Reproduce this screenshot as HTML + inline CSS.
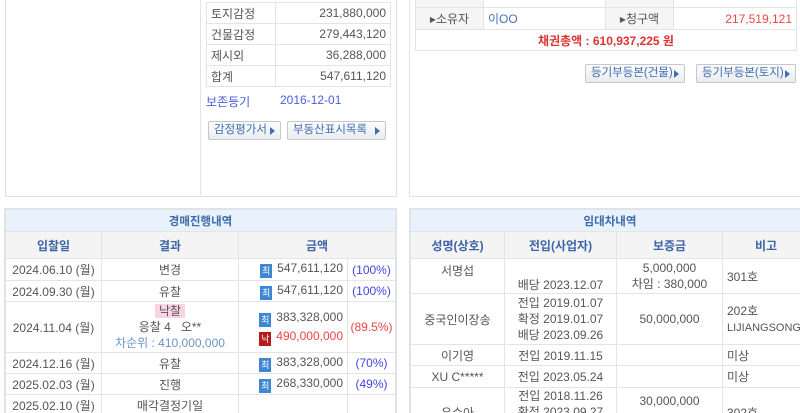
<!DOCTYPE html>
<html style="overflow:hidden;height:413px"><head><meta charset="utf-8"><style>
*{margin:0;padding:0;box-sizing:border-box}
body{width:800px;height:413px;overflow:hidden;background:#fff;font-family:"Liberation Sans","Noto Sans CJK KR",sans-serif;font-size:12px;color:#555}
#w{position:relative;width:800px;height:413px;overflow:hidden}
.abs{position:absolute}
.clip{position:absolute;overflow:hidden}
table{border-collapse:collapse;table-layout:fixed}
td,th{border:1px solid #e4e4e4;font-weight:normal;padding:0 4px;white-space:nowrap;overflow:hidden}
.btn{position:absolute;height:19px;border:1px solid #c4c8cc;border-radius:2px;background:linear-gradient(#fdfdfd,#e9ecef);color:#3d6fb0;font-size:11.5px;line-height:17px;padding-left:5px}
.btn:after{content:"";position:absolute;right:5px;top:5px;border-left:5px solid #3d6fb0;border-top:4px solid transparent;border-bottom:4px solid transparent}
.hd{background:#e9f1fc;color:#3d6aa8;text-align:center;font-weight:bold;font-size:11.5px}
.ch th{background:#f4f4f4;color:#3d64a6;font-weight:bold;font-size:12px}
.c{text-align:center}.r{text-align:right}
.ico{display:inline-block;width:12px;height:14px;background:#3f86d3;color:#fff;font-size:9px;line-height:14px;text-align:center;vertical-align:-2px;margin-right:5px}
.ico.n{background:#b51c1c}
.bl{color:#4545e0}.rd{color:#e44}
</style></head><body><div id="w">
<div class="abs" style="left:5px;top:0;width:392px;height:197px;border:1px solid #dde2ea;border-top:none"></div>
<div class="abs" style="left:200px;top:0;width:1px;height:195px;background:#e4e4e4"></div>
<table class="abs" style="left:206px;top:2px;width:185px">
<col style="width:69px"><col>
<tr style="height:21px"><td>토지감정</td><td class="r">231,880,000</td></tr>
<tr style="height:21px"><td>건물감정</td><td class="r">279,443,120</td></tr>
<tr style="height:21px"><td>제시외</td><td class="r">36,288,000</td></tr>
<tr style="height:21px"><td>합계</td><td class="r">547,611,120</td></tr>
</table>
<div class="abs" style="left:206px;top:93px;color:#4a5ee0">보존등기</div>
<div class="abs" style="left:280px;top:93px;color:#4a5ee0">2016-12-01</div>
<div class="btn" style="left:208px;top:121px;width:73px">감정평가서</div>
<div class="btn" style="left:287px;top:121px;width:99px">부동산표시목록</div>
<div class="abs" style="left:409px;top:0;width:391px;height:197px;border:1px solid #dde2ea;border-top:none;border-right:none"></div>
<div class="clip" style="left:415px;top:0;width:385px;height:60px">
<table style="position:absolute;left:0;top:-15px;width:382px">
<col style="width:68px"><col style="width:122px"><col style="width:68px"><col>
<tr style="height:22px"><td class="c" style="background:#f5f5f5"></td><td></td><td style="background:#f5f5f5"></td><td></td></tr>
<tr style="height:22px"><td class="c" style="background:#f5f5f5">▸소유자</td><td style="color:#4a6fb5">이OO</td><td class="c" style="background:#f5f5f5">▸청구액</td><td class="r rd">217,519,121</td></tr>
<tr style="height:21px"><td colspan="4" class="c" style="color:#d33;font-weight:bold">채권총액 : 610,937,225 원</td></tr>
</table></div>
<div class="btn" style="left:585px;top:64px;width:100px">등기부등본(건물)</div>
<div class="btn" style="left:696px;top:64px;width:100px">등기부등본(토지)</div>
<div class="abs" style="left:4px;top:208px;width:393px;height:205px;border:1px solid #dde2ea;border-bottom:none"></div>
<div class="clip" style="left:5px;top:209px;width:391px;height:204px">
<table style="width:391px">
<col style="width:96px"><col style="width:137px"><col style="width:109px"><col>
<tr style="height:22px"><td colspan="4" class="hd">경매진행내역</td></tr>
<tr class="ch" style="height:27px"><th>입찰일</th><th>결과</th><th colspan="2">금액</th></tr>
<tr style="height:22px"><td class="c">2024.06.10 (월)</td><td class="c">변경</td><td class="r"><span class="ico">최</span>547,611,120</td><td class="c bl" style="padding:0">(100%)</td></tr>
<tr style="height:21px"><td class="c">2024.09.30 (월)</td><td class="c">유찰</td><td class="r"><span class="ico">최</span>547,611,120</td><td class="c bl" style="padding:0">(100%)</td></tr>
<tr style="height:51px"><td class="c">2024.11.04 (월)</td><td class="c" style="line-height:16px"><span style="background:#fbd3e3;padding:0 4px">낙찰</span><br>응찰 4 &nbsp; 오**<br><span style="color:#6a95c8">차순위 : 410,000,000</span></td><td class="r" style="line-height:18px"><span class="ico">최</span>383,328,000<br><span class="ico n">낙</span><span class="rd">490,000,000</span></td><td class="c rd" style="padding:0">(89.5%)</td></tr>
<tr style="height:21px"><td class="c">2024.12.16 (월)</td><td class="c">유찰</td><td class="r"><span class="ico">최</span>383,328,000</td><td class="c bl" style="padding:0">(70%)</td></tr>
<tr style="height:21px"><td class="c">2025.02.03 (월)</td><td class="c">진행</td><td class="r"><span class="ico">최</span>268,330,000</td><td class="c bl" style="padding:0">(49%)</td></tr>
<tr style="height:22px"><td class="c">2025.02.10 (월)</td><td class="c">매각결정기일</td><td></td><td></td></tr>
</table></div>
<div class="abs" style="left:409px;top:208px;width:391px;height:205px;border:1px solid #dde2ea;border-bottom:none;border-right:none"></div>
<div class="clip" style="left:410px;top:209px;width:390px;height:204px">
<table style="width:400px">
<col style="width:94px"><col style="width:112px"><col style="width:106px"><col>
<tr style="height:22px"><td colspan="4" class="hd">임대차내역</td></tr>
<tr class="ch" style="height:27px"><th>성명(상호)</th><th>전입(사업자)</th><th>보증금</th><th>비고</th></tr>
<tr style="height:35px"><td class="c" style="vertical-align:top;padding-top:3px">서명섭</td><td class="c" style="vertical-align:bottom">배당 2023.12.07</td><td class="c" style="line-height:16px">5,000,000<br>차임 : 380,000</td><td>301호</td></tr>
<tr style="height:51px"><td class="c">중국인이장송</td><td class="c" style="line-height:16px">전입 2019.01.07<br>확정 2019.01.07<br>배당 2023.09.26</td><td class="c">50,000,000</td><td style="line-height:16px">202호<br><span style="font-size:11px">LIJIANGSONG</span></td></tr>
<tr style="height:21px"><td class="c">이기영</td><td class="c">전입 2019.11.15</td><td></td><td>미상</td></tr>
<tr style="height:22px"><td class="c">XU C*****</td><td class="c">전입 2023.05.24</td><td></td><td>미상</td></tr>
<tr style="height:50px"><td class="c">유수아</td><td class="c" style="vertical-align:top;line-height:16px">전입 2018.11.26<br>확정 2023.09.27</td><td class="c" style="vertical-align:top;padding-top:6px">30,000,000</td><td>302호</td></tr>
</table></div>
</div></body></html>
